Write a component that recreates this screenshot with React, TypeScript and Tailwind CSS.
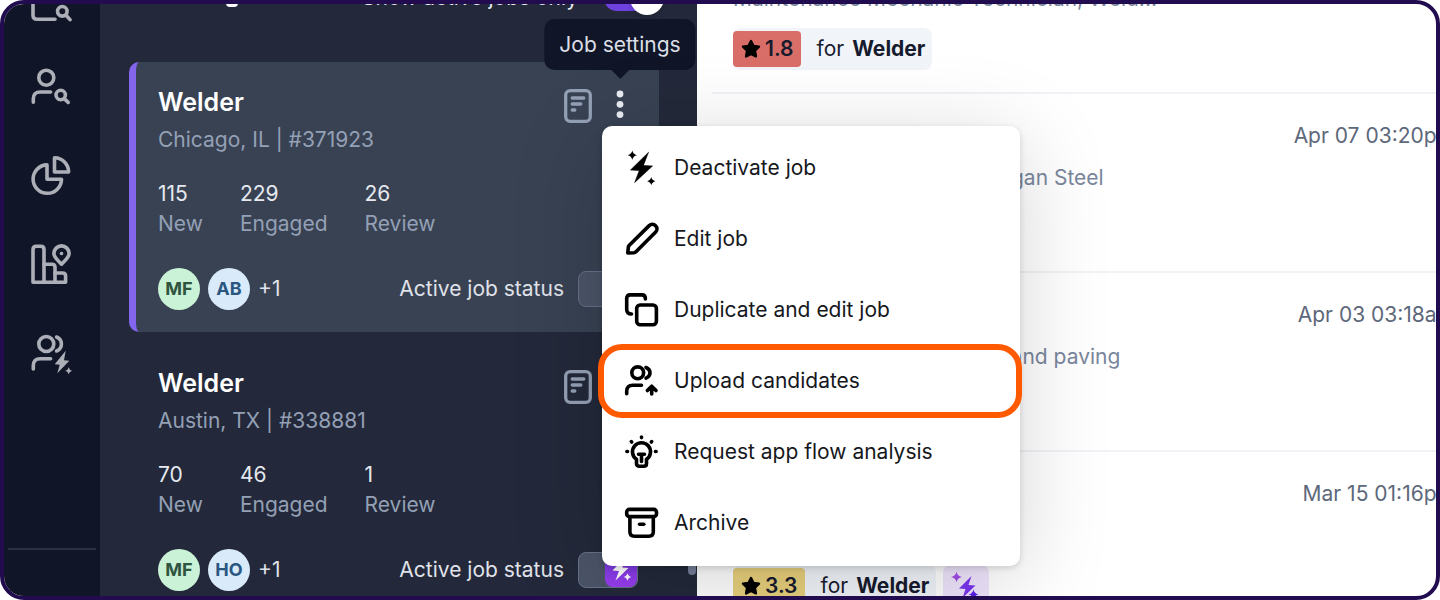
import type { ReactNode } from "react";

const SPARKLE = "M0 -4.6Q.8 -.8 4.6 0Q.8 .8 0 4.6Q-.8 .8 -4.6 0Q-.8 -.8 0 -4.6Z";

function NavIcon({ children }: { children: ReactNode }) {
  return (
    <svg viewBox="0 0 48 48" className="size-12" fill="none" stroke="currentColor" strokeWidth="3.6" strokeLinecap="round" strokeLinejoin="round" aria-hidden="true">
      {children}
    </svg>
  );
}

function MenuIcon({ children }: { children: ReactNode }) {
  return (
    <svg viewBox="0 0 36 36" className="size-9 shrink-0" fill="none" stroke="currentColor" strokeWidth="3.6" strokeLinecap="round" strokeLinejoin="round" aria-hidden="true">
      {children}
    </svg>
  );
}

const navItems: { label: string; icon: ReactNode }[] = [
  {
    label: "Search jobs",
    icon: (
      <>
        <path d="M5 12V41.3Q5 45.3 9 45.3H27" />
        <circle cx="34.3" cy="37.3" r="4.8" />
        <path d="M38 41.2L42 45.6" />
      </>
    ),
  },
  {
    label: "Search candidates",
    icon: (
      <>
        <circle cx="18.3" cy="14.7" r="7.5" />
        <path d="M22.6 29H12.3Q5.3 29 5.3 36V39.2" />
        <circle cx="32.7" cy="32" r="4.7" />
        <path d="M36.2 35.6L40.2 39.4" />
      </>
    ),
  },
  {
    label: "Reports",
    icon: (
      <>
        <path d="M19 12.9V27.2H33.5A14.2 14.2 0 1 1 19 12.9Z" />
        <path d="M26.5 5.7V20H40.6A14.2 14.2 0 0 0 26.5 5.7Z" />
      </>
    ),
  },
  {
    label: "Market insights",
    icon: (
      <>
        <path d="M5 41.2V8.5Q5 5.2 8.3 5.2H12.8Q16 5.2 16 8.5V41.2Z" />
        <path d="M16 23.2H24Q27 23.2 27 26.2V41.2H16" />
        <path d="M27 32H34.5Q37.6 32 37.6 35V41.2H27" />
        <path d="M33.5 23.2C30 19.4 25.9 16.5 25.9 12.5A7.6 7.6 0 0 1 41.1 12.5C41.1 16.5 37 19.4 33.5 23.2Z" />
        <circle cx="33.5" cy="12.5" r="1.8" fill="currentColor" stroke="none" />
      </>
    ),
  },
  {
    label: "Active sourcing",
    icon: (
      <>
        <circle cx="18.3" cy="14" r="7.5" />
        <path d="M28.6 7Q33.4 9 33.4 14T28.6 21" />
        <path d="M22.6 28.7H12.3Q5.3 28.7 5.3 35.7V39" />
        <path d="M37.7 20.7L26.7 34.2L31.7 34.7L29.3 43.3L41.3 30.7L36 30.2Z" fill="currentColor" stroke="none" />
        <path d={SPARKLE} transform="translate(40.7 40.7) scale(.75)" fill="currentColor" stroke="none" />
      </>
    ),
  },
];

const menuItems: { label: string; highlighted?: boolean; icon: ReactNode }[] = [
  {
    label: "Deactivate job",
    icon: (
      <g fill="currentColor" stroke="none">
        <path d="M24.3 2.5L6.5 20L15.3 20.5L10.7 32.5L28.5 16L19.6 15.5Z" stroke="currentColor" strokeWidth=".6" />
        <path d={SPARKLE} transform="translate(8.3 5.2)" />
        <path d={SPARKLE} transform="translate(27.3 31.2) scale(.9)" />
      </g>
    ),
  },
  {
    label: "Edit job",
    icon: <path d="M3.8 32L4.3 26.5Q4.4 25.2 5.3 24.3L25.2 4.6A4.6 4.6 0 0 1 31.7 11.1L12 30.8Q11.1 31.7 9.9 31.8Z" />,
  },
  {
    label: "Duplicate and edit job",
    icon: (
      <>
        <rect x="12.7" y="13" width="19.7" height="19.7" rx="3.4" />
        <path d="M7.5 22Q2.7 22 2.7 17.5V6.3Q2.7 2.9 6.1 2.9H17.9Q21.4 2.9 21.4 7" />
      </>
    ),
  },
  {
    label: "Upload candidates",
    highlighted: true,
    icon: (
      <>
        <circle cx="13.7" cy="9.8" r="5.9" />
        <path d="M22 4.5Q26 6 26 9.8T22 15.2" />
        <path d="M17.5 22.2H8.7Q2.7 22.2 2.7 28.2V30.8" />
        <path d="M27.7 31V23.5M23.4 27.5L27.7 23.2L32 27.5" />
      </>
    ),
  },
  {
    label: "Request app flow analysis",
    icon: (
      <>
        <path d="M12.5 25.2A9 9 0 1 1 22.5 25.2V29.5Q22.5 32.3 19.7 32.3H15.3Q12.5 32.3 12.5 29.5Z" />
        <path d="M14.5 20.2H20.5M17.5 20.5V27.5" />
        <path d="M17.5 3V3.6M7.3 7.6L7.7 8M27.7 7.6L27.3 8M2.9 17.5H3.5M31.5 17.5H32.1" />
      </>
    ),
  },
  {
    label: "Archive",
    icon: (
      <>
        <rect x="2.7" y="4.4" width="29.8" height="7.2" rx="2.6" />
        <path d="M5.9 12V26.8Q5.9 31.2 10.3 31.2H24.9Q29.3 31.2 29.3 26.8V12" />
        <path d="M15.6 19.2H19.8" />
      </>
    ),
  },
];

function Bolt({ className }: { className: string }) {
  return (
    <svg viewBox="0 0 24 24" className={className} fill="currentColor" aria-hidden="true">
      <path d="M14.5 1L3.5 12.5L10 13L6.5 22.5L19.5 10L13.2 9.5L17.5 1Z" />
      <path d={SPARKLE} transform="translate(18.5 19) scale(.85)" />
    </svg>
  );
}

type Job = {
  place: string;
  number: string;
  counts: [string, string][];
  second: string;
  selected?: boolean;
};

const jobs: Job[] = [
  { place: "Chicago, IL", number: "#371923", counts: [["115", "New"], ["229", "Engaged"], ["26", "Review"]], second: "AB", selected: true },
  { place: "Austin, TX", number: "#338881", counts: [["70", "New"], ["46", "Engaged"], ["1", "Review"]], second: "HO" },
];

function JobMenu() {
  return (
    <div role="menu" aria-label="Job settings" className="absolute left-0 top-10 z-20 flex w-[418px] flex-col rounded-[10px] bg-white pb-2 pt-1.5 text-[#16181d] shadow-[0_16px_90px_rgba(0,0,0,0.17),0_2px_6px_rgba(0,0,0,0.15)]">
      {menuItems.map((item) => (
        <button key={item.label} role="menuitem" type="button" className="relative flex h-[71px] items-center gap-3.5 px-[22px] text-left">
          <span className="text-black">
            <MenuIcon>{item.icon}</MenuIcon>
          </span>
          {item.label}
          {item.highlighted && <span className="absolute -bottom-0.5 -left-1 -right-0.5 -top-px rounded-3xl border-[6px] border-[#ff5a00]" />}
        </button>
      ))}
    </div>
  );
}

function JobCard({ job }: { job: Job }) {
  return (
    <article
      className={
        job.selected
          ? "relative z-10 rounded-l-[10px] border-l-[7px] border-[#8465ee] bg-[#384253] pb-[22px] pl-[22px] pr-[21px] pt-6"
          : "rounded-l-[10px] border-l-[7px] border-transparent pb-[22px] pl-[22px] pr-[21px] pt-6"
      }
    >
      <div className="flex justify-between">
        <div>
          <h2 className="text-[25px]/8 font-semibold text-white">Welder</h2>
          <p className="mt-[7px] text-[#94a0b5]">
            {job.place} | {job.number}
          </p>
        </div>
        <div className="flex items-start gap-2.5">
          <svg viewBox="0 0 28 34" className="mt-[3px] h-[34px] w-7 text-[#94a0b5]" fill="none" stroke="currentColor" strokeWidth="3.3" strokeLinecap="round" aria-hidden="true">
            <rect x="1.7" y="1.7" width="24.6" height="30.6" rx="4.5" />
            <path d="M8.2 9H19.8M8.2 15H16.8M8.2 21H10.8" />
          </svg>
          <div className="relative">
            <button type="button" aria-label="Job settings" className="flex h-9 w-9 items-center justify-center text-[#e8ebf2]">
              <svg viewBox="0 0 8 30" className="h-[30px] w-2" fill="currentColor" aria-hidden="true">
                <circle cx="4" cy="5" r="3.4" />
                <circle cx="4" cy="15.3" r="3.4" />
                <circle cx="4" cy="25.6" r="3.4" />
              </svg>
            </button>
            {job.selected && (
              <>
                <div role="tooltip" className="absolute -top-[67px] left-1/2 flex h-[51px] -translate-x-1/2 items-center whitespace-nowrap rounded-[10px] bg-[#101627] px-[15px] text-[#dcdfe6]">
                  Job settings
                  <svg viewBox="0 0 18 9" className="absolute left-1/2 top-full h-[9px] w-[18px] -translate-x-1/2" aria-hidden="true">
                    <path d="M0 0H18L9 9Z" fill="#101627" />
                  </svg>
                </div>
                <JobMenu />
              </>
            )}
          </div>
        </div>
      </div>
      <dl className="mt-6 flex gap-[37px]">
        {job.counts.map(([count, label]) => (
          <div key={label} className="flex flex-col-reverse">
            <dt className="text-[#94a0b5]">{label}</dt>
            <dd className="text-[#e6e9f0]">{count}</dd>
          </div>
        ))}
      </dl>
      <div className="mt-[29px] flex items-center justify-between text-[#e0e3ea]">
        <div className="flex items-center gap-2">
          <span className="flex size-[42px] items-center justify-center rounded-full bg-[#c9f2d6] text-lg font-bold text-[#2f5540]">MF</span>
          <span className="flex size-[42px] items-center justify-center rounded-full bg-[#d9ebfb] text-lg font-bold text-[#2a5680]">{job.second}</span>
          <span>+1</span>
        </div>
        <label className="relative flex items-center gap-3.5">
          Active job status
          <input type="checkbox" defaultChecked className="sr-only" />
          <span className="flex h-9 w-[60px] justify-end rounded-lg border border-[#66728a] bg-[#4b5568]">
            <span className="flex w-8 items-center justify-center rounded-lg bg-linear-to-b from-[#6d38d8] to-[#9a3df0] text-white">
              <Bolt className="size-6" />
            </span>
          </span>
        </label>
      </div>
    </article>
  );
}

function Rating({ score, tone }: { score: string; tone: "low" | "mid" }) {
  return (
    <div className="flex h-[42px] items-center rounded-lg bg-[#f1f5fa] pr-[7px] text-[#171b2e]">
      <span
        className={
          tone === "low"
            ? "flex h-9 items-center gap-1 rounded bg-[#d86e67] px-2 font-semibold"
            : "flex h-9 items-center gap-1 rounded bg-[#e8d07c] px-2 font-semibold"
        }
      >
        <svg viewBox="0 0 20 20" className="size-5" fill="#000" stroke="#000" strokeWidth="2.4" strokeLinejoin="round" aria-hidden="true">
          <path d="M10 2L12.4 6.9L18 7.7L14 11.6L14.9 17.4L10 15L5.1 17.4L6 11.6L2 7.7L7.6 6.9Z" />
        </svg>
        {score}
      </span>
      <span className="ml-[15px] mr-2">for</span>
      <strong className="font-bold">Welder</strong>
    </div>
  );
}

function CandidateRow({ date, detail, children }: { date?: string; detail?: string; children?: ReactNode }) {
  return (
    <li className="ml-[15px] h-[179px] border-b-2 border-[#f1f2f7] pl-[21px] pt-[27px]">
      <p className="h-[30px] text-right text-[#5d687a]">{date}</p>
      <p className="mt-3 h-[30px] text-[#7a869c]">{detail}</p>
      <div className="mt-3.5 flex gap-[7px]">{children}</div>
    </li>
  );
}

export default function App() {
  return (
    <div className="flex h-screen overflow-hidden rounded-[24px] border-4 border-[#210c50] bg-white font-['Inter',sans-serif] text-[21px]/[30px]">
      <nav className="flex w-24 shrink-0 flex-col justify-between bg-[#101627] text-[#adafb8]">
        <ul className="-mt-[30px] flex flex-col items-center gap-[41px]">
          {navItems.map((item) => (
            <li key={item.label}>
              <a href="#" aria-label={item.label} className="block">
                <NavIcon>{item.icon}</NavIcon>
              </a>
            </li>
          ))}
        </ul>
        <hr className="mx-1 mb-[46px] border-t-2 border-[#2b3142]" />
      </nav>

      <section className="relative z-10 w-[597px] shrink-0 bg-[#23293a] pl-[29px] pr-[38px]">
        <header className="-mt-[26px] mb-11 flex h-10 items-center justify-between pl-[97px] text-[#e6e9f0]">
          <span className="h-[18px] w-3 rounded-sm bg-white" />
          <label className="relative flex items-center gap-[26px] whitespace-nowrap">
            Show active jobs only
            <input type="checkbox" defaultChecked className="sr-only" />
            <span className="mr-[-5px] flex h-[26px] w-[60px] items-center justify-end rounded-full bg-[#6d42de]">
              <span className="size-[34px] rounded-full bg-white shadow-md" />
            </span>
          </label>
        </header>
        <div className="flex flex-col gap-[11px]">
          {jobs.map((job) => (
            <JobCard key={job.number} job={job} />
          ))}
        </div>
        <span className="absolute bottom-[21px] right-px h-24 w-2 rounded-full bg-[#76819b]" />
      </section>

      <main className="min-w-0 flex-1 overflow-hidden">
        <ul className="-mr-[19px] -mt-[89px]">
          <CandidateRow detail="Maintenance Mechanic Technician, Weld...">
            <Rating score="1.8" tone="low" />
          </CandidateRow>
          <CandidateRow date="Apr 07 03:20pm" detail="Structural Steel Welder, Morgan Steel" />
          <CandidateRow date="Apr 03 03:18am" detail="Concrete Laborers, Asphalt and paving" />
          <CandidateRow date="Mar 15 01:16pm">
            <Rating score="3.3" tone="mid" />
            <span className="flex h-[42px] w-[46px] items-center justify-center rounded-lg bg-[#efe5fd] text-[#7a35ee]">
              <svg viewBox="0 0 30 30" className="size-[30px]" fill="currentColor" aria-hidden="true">
                <path d="M20.5 5L8 17.5L14.5 18L11.5 27L24.5 14.5L17.5 14Z" />
                <path d={SPARKLE} transform="translate(5.5 6) scale(1.15)" fill="#a24be8" />
                <path d={SPARKLE} transform="translate(22.5 23.5) scale(1.1)" fill="#5a1fe8" />
              </svg>
            </span>
          </CandidateRow>
        </ul>
      </main>
    </div>
  );
}
